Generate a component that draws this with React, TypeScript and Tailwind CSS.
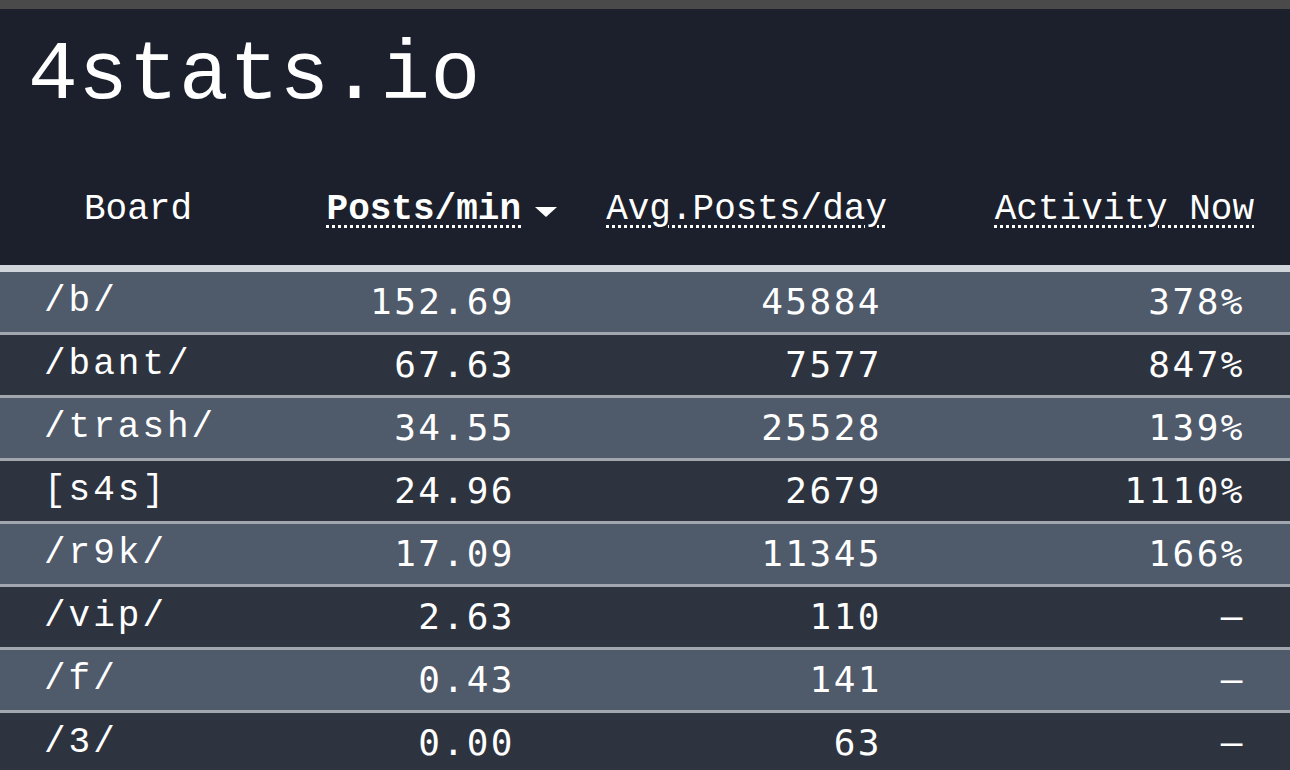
import React from "react"

type BoardRow = {
  board: string
  perMin: string
  perDay: string
  activity: string
}

const rows: BoardRow[] = [
  { board: "/b/", perMin: "152.69", perDay: "45884", activity: "378%" },
  { board: "/bant/", perMin: "67.63", perDay: "7577", activity: "847%" },
  { board: "/trash/", perMin: "34.55", perDay: "25528", activity: "139%" },
  { board: "[s4s]", perMin: "24.96", perDay: "2679", activity: "1110%" },
  { board: "/r9k/", perMin: "17.09", perDay: "11345", activity: "166%" },
  { board: "/vip/", perMin: "2.63", perDay: "110", activity: "–" },
  { board: "/f/", perMin: "0.43", perDay: "141", activity: "–" },
  { board: "/3/", perMin: "0.00", perDay: "63", activity: "–" },
]

const cols = "grid grid-cols-[290px_270px_340px_1fr]"
const mono = "font-['Courier_New','Nimbus_Mono_PS','FreeMono','Liberation_Mono',monospace]"
const nums = "font-['DejaVu_Sans_Mono',monospace] text-[36px] tracking-[2.5px] text-right"

function SortArrow() {
  return (
    <svg width="22" height="10" viewBox="0 0 22 10" className="ml-[14px] mt-[4px] shrink-0">
      <path d="M0 0 L22 0 L11 10 Z" fill="#ffffff" />
    </svg>
  )
}

export default function App() {
  return (
    <div className="min-h-[770px] w-[1290px] overflow-hidden bg-[#2e343f] text-white">
      <div className="h-[9px] bg-[#4a4a4a]" />

      <header className={`bg-[#1b202c] ${mono}`}>
        <h1 className="pl-[28px] pt-[22px] text-[83px] leading-[90px] tracking-[0.5px]">4stats.io</h1>

        {/* column headings */}
        <div className={`${cols} h-[144px] items-center pt-[34px] text-[36px]`}>
          <div className="pl-[84px]">Board</div>
          <div className="flex items-center justify-end pr-[3px] font-bold">
            <span className="underline decoration-dotted decoration-[3px] underline-offset-[6px]">Posts/min</span>
            <SortArrow />
          </div>
          <div className="pr-[13px] text-right">
            <span className="underline decoration-dotted decoration-[3px] underline-offset-[6px]">Avg.Posts/day</span>
          </div>
          <div className="pr-[36px] text-right">
            <span className="underline decoration-dotted decoration-[3px] underline-offset-[6px]">Activity Now</span>
          </div>
        </div>
      </header>

      <div className="h-[7px] bg-[#d0d4db]" />

      <div>
        {rows.map((r, i) => (
          <div
            key={r.board}
            className={`${cols} h-[63px] items-center border-b-[3px] border-[#a2a6af] ${
              i % 2 === 0 ? "bg-[#4f5a6b]" : "bg-[#2e343f]"
            }`}
          >
            <div className={`pl-[44px] ${mono} text-[36px] tracking-[3px]`}>{r.board}</div>
            <div className={`pr-[45px] ${nums}`}>{r.perMin}</div>
            <div className={`pr-[18px] ${nums}`}>{r.perDay}</div>
            <div className={`pr-[45px] ${nums}`}>{r.activity}</div>
          </div>
        ))}
      </div>
    </div>
  )
}
